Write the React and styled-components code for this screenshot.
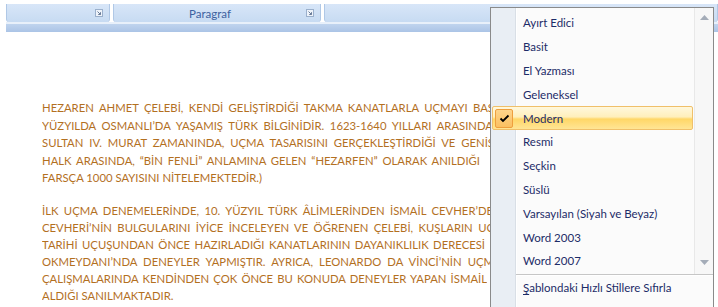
import styled, { createGlobalStyle } from "styled-components";

const GlobalStyle = createGlobalStyle`
  html, body {
    margin: 0;
    padding: 0;
    background: #ffffff;
  }
`;

const Page = styled.div`
  position: relative;
  width: 718px;
  height: 307px;
  overflow: hidden;
  background: #ffffff;
`;

const Ribbon = styled.div`
  margin-left: 6px;
  padding-top: 4px;
`;

const GroupRow = styled.div`
  display: flex;
  gap: 3px;
  height: 18px;
`;

const Group = styled.div`
  display: flex;
  align-items: center;
  width: ${(p) => (p.$width ? `${p.$width}px` : "auto")};
  flex: ${(p) => (p.$width ? "none" : "1")};
  box-sizing: border-box;
  border-left: 1px solid #b0c8e6;
  border-right: 1px solid #b0c8e6;
  border-radius: 0 0 3px 3px;
  background: linear-gradient(#d8e6f8, #c7dbf2);
`;

const Caption = styled.span`
  flex: 1;
  text-align: center;
  font-family: Lato, "Liberation Sans", sans-serif;
  font-size: 11.5px;
  color: #3d62a0;
`;

const Launcher = styled.svg`
  flex: none;
  margin-right: 6px;
`;

const Band = styled.div`
  height: 8px;
  border-top: 2px solid #e8f0fa;
  background: linear-gradient(#c0d4ee, #abc4e6);
`;

const Document = styled.div`
  padding: 67px 0 0 42px;
  font-family: Lato, "Liberation Sans", sans-serif;
  font-size: 11.3px;
  color: #b3701f;
`;

const Paragraph = styled.div`
  margin-bottom: 15.5px;
  line-height: ${(p) => p.$lineHeight}px;
`;

const Line = styled.div`
  width: ${(p) => (p.$width ? `${p.$width}px` : "auto")};
  text-align: justify;
  text-align-last: ${(p) => (p.$width ? "justify" : "left")};
  overflow: hidden;
  white-space: normal;
`;

const Menu = styled.div`
  position: absolute;
  left: 490px;
  top: 7px;
  width: 224px;
  height: 310px;
  box-sizing: border-box;
  border: 1px solid #8a8a8a;
  background: linear-gradient(
    to right,
    #e9eef4 0 24px,
    #d9dfe6 24px 25px,
    #ffffff 25px 26px,
    #fbfbfb 26px
  );
  font-family: Lato, "Liberation Sans", sans-serif;
  font-size: 11.5px;
  color: #1d2c68;
`;

const ScrollArea = styled.div`
  display: flex;
  height: 266px;
`;

const ItemList = styled.div`
  flex: 1;
  padding: 3px 1px 0 1px;
`;

const ScrollColumn = styled.div`
  width: 19px;
  display: flex;
  flex-direction: column;
  justify-content: space-between;
  align-items: center;
  padding: 7px 0 9px;
  box-sizing: border-box;
  border-left: 1px solid #e8e8e8;
  background: #f7f7f7;
`;

const Item = styled.div`
  display: flex;
  align-items: center;
  height: 23.8px;
  box-sizing: border-box;
  border: 1px solid ${(p) => (p.$selected ? "#f0c06a" : "transparent")};
  border-radius: 2px;
  background: ${(p) =>
    p.$selected
      ? "linear-gradient(#fff8dd 0%, #ffefbb 45%, #ffd767 55%, #ffe595 100%)"
      : "transparent"};
`;

const CheckCell = styled.div`
  width: 22px;
  height: 100%;
  margin-right: 8px;
  display: flex;
  align-items: center;
  justify-content: center;
`;

const CheckBox = styled.div`
  width: 18px;
  height: 19px;
  box-sizing: border-box;
  border: 1px solid #ee9f3e;
  border-radius: 2px;
  background: linear-gradient(#fdd48b, #fbc061);
  display: flex;
  align-items: center;
  justify-content: center;
`;

const Separator = styled.div`
  margin-left: 25px;
  height: 1px;
  background: #c6c6c6;
  border-bottom: 1px solid #ffffff;
`;

const Footer = styled(ItemList)`
  padding-top: 0;
`;

const Mnemonic = styled.u`
  text-decoration-thickness: 1px;
  text-underline-offset: 2px;
`;

const LauncherIcon = () => (
  <Launcher width="8" height="8" viewBox="0 0 8 8">
    <rect x="0.5" y="0.5" width="7" height="7" fill="#eef3fa" stroke="#9bb0cc" />
    <path d="M2.5 2.5 L5.5 5.5 M5.5 3.2 V5.5 H3.2" stroke="#6a7d99" strokeWidth="1" fill="none" />
  </Launcher>
);

const Arrow = ({ down }) => (
  <svg width="9" height="5" viewBox="0 0 9 5">
    <path d={down ? "M0 0 H9 L4.5 5 Z" : "M0 5 H9 L4.5 0 Z"} fill="#a4acb8" />
  </svg>
);

const styles = [
  "Ayırt Edici",
  "Basit",
  "El Yazması",
  "Geleneksel",
  "Modern",
  "Resmi",
  "Seçkin",
  "Süslü",
  "Varsayılan (Siyah ve Beyaz)",
  "Word 2003",
  "Word 2007",
];

const para1 = [
  ["HEZAREN AHMET ÇELEBİ, KENDİ GELİŞTİRDİĞİ TAKMA KANATLARLA UÇMAYI BAŞ", 452],
  ["YÜZYILDA OSMANLI’DA YAŞAMIŞ TÜRK BİLGİNİDİR. 1623-1640 YILLARI ARASINDA", 451],
  ["SULTAN IV. MURAT ZAMANINDA, UÇMA TASARISINI GERÇEKLEŞTİRDİĞİ VE GENİŞ", 452],
  ["HALK ARASINDA, “BİN FENLİ” ANLAMINA GELEN “HEZARFEN” OLARAK ANILDIĞI", 438],
  ["FARSÇA 1000 SAYISINI NİTELEMEKTEDİR.)", 0],
];

const para2 = [
  ["İLK UÇMA DENEMELERİNDE, 10. YÜZYIL TÜRK ÂLİMLERİNDEN İSMAİL CEVHER’DE", 451],
  ["CEVHERİ’NİN BULGULARINI İYİCE İNCELEYEN VE ÖĞRENEN ÇELEBİ, KUŞLARIN UÇ", 452],
  ["TARİHİ UÇUŞUNDAN ÖNCE HAZIRLADIĞI KANATLARININ DAYANIKLILIK DERECESİ", 443],
  ["OKMEYDANI’NDA DENEYLER YAPMIŞTIR. AYRICA, LEONARDO DA VİNCİ’NİN UÇM", 452],
  ["ÇALIŞMALARINDA KENDİNDEN ÇOK ÖNCE BU KONUDA DENEYLER YAPAN İSMAİL", 445],
  ["ALDIĞI SANILMAKTADIR.", 0],
];

export default function App() {
  return (
    <Page>
      <GlobalStyle />
      <Ribbon>
        <GroupRow>
          <Group $width={104}>
            <Caption />
            <LauncherIcon />
          </Group>
          <Group $width={208}>
            <Caption>Paragraf</Caption>
            <LauncherIcon />
          </Group>
          <Group>
            <Caption />
          </Group>
        </GroupRow>
        <Band />
      </Ribbon>

      <Document>
        <Paragraph $lineHeight={17.6}>
          {para1.map(([text, w]) => (
            <Line key={text} $width={w}>{text}</Line>
          ))}
        </Paragraph>
        <Paragraph $lineHeight={17}>
          {para2.map(([text, w]) => (
            <Line key={text} $width={w}>{text}</Line>
          ))}
        </Paragraph>
      </Document>

      <Menu>
        <ScrollArea>
          <ItemList>
            {styles.map((name) => (
              <Item key={name} $selected={name === "Modern"}>
                <CheckCell>
                  {name === "Modern" && (
                    <CheckBox>
                      <svg width="11" height="9" viewBox="0 0 11 9">
                        <path d="M1.5 4.5 L4 7 L9.5 1.5" stroke="#000" strokeWidth="1.8" fill="none" />
                      </svg>
                    </CheckBox>
                  )}
                </CheckCell>
                {name}
              </Item>
            ))}
          </ItemList>
          <ScrollColumn>
            <Arrow />
            <Arrow down />
          </ScrollColumn>
        </ScrollArea>
        <Separator />
        <Footer>
          <Item>
            <CheckCell />
            <span>
              <Mnemonic>Ş</Mnemonic>ablondaki Hızlı Stillere Sıfırla
            </span>
          </Item>
        </Footer>
      </Menu>
    </Page>
  );
}
